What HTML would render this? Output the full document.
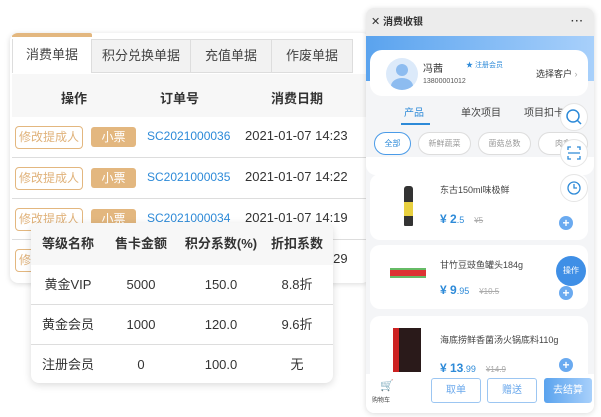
<!DOCTYPE html><html><head><meta charset="utf-8"><style>
*{margin:0;padding:0;box-sizing:border-box}
body{width:601px;height:417px;background:#fff;font-family:"Liberation Sans","Noto Sans CJK SC",sans-serif;position:relative;overflow:hidden;color:#333}
.abs{position:absolute}
.card{position:absolute;left:10px;top:33px;width:360px;height:250px;background:#fff;border-radius:8px;box-shadow:0 1px 6px rgba(0,0,0,.15);overflow:hidden}
.tab{position:absolute;top:6px;height:34px;border:1px solid #ddd;background:#f2f2f2;font-size:13px;line-height:32px;text-align:center;color:#444}
.hdr{position:absolute;left:2px;top:41px;width:358px;height:43px;background:#f7f7f7;font-size:13px;font-weight:bold}
.row{position:absolute;left:2px;width:358px;height:41px;border-bottom:1px solid #ddd;font-size:13px}
.b1{position:absolute;left:3px;top:9px;width:68px;height:23px;border:1px solid #e3b77f;border-radius:4px;color:#e0b27a;font-size:12px;line-height:21px;text-align:center}
.b2{position:absolute;left:79px;top:10px;width:45px;height:20px;background:#e3b77f;border-radius:3px;color:#fff;font-size:12px;line-height:20px;text-align:center}
.sc{position:absolute;left:135px;top:12px;color:#2d8ad8;font-size:12px}
.dt{position:absolute;left:233px;top:11px;font-size:13px;color:#333}
.ft{position:absolute;left:31px;top:223px;width:302px;height:160px;background:#fff;border-radius:8px;box-shadow:0 2px 8px rgba(0,0,0,.15);overflow:hidden;font-size:13px}
.ft .r{position:absolute;left:0;width:302px;height:40px;border-bottom:1px solid #ddd}
.ft span{position:absolute;top:12px;line-height:16px;height:16px;transform:translateX(-50%);white-space:nowrap}
.ph{position:absolute;left:366px;top:8px;width:228px;height:405px;background:#f4f5f7;border-radius:8px;box-shadow:0 1px 6px rgba(0,0,0,.15);overflow:hidden}
.pc{position:absolute;left:4px;width:218px;background:#fff;border-radius:10px}
.chip{position:absolute;top:124px;height:23px;border:1px solid #ddd;border-radius:12px;font-size:8px;color:#999;line-height:21px;text-align:center;background:#fff}
.fb{position:absolute;z-index:5;left:194px;width:28px;height:28px;border-radius:50%;background:#fff;border:1px solid #e5e5e5}
.plus{position:absolute;left:193px;width:14px;height:14px;border-radius:50%;background:#6aaaf0;color:#fff;font-size:12px;line-height:14px;text-align:center;font-weight:bold}
.pn{position:absolute;left:70px;font-size:9px;color:#444}
.pr{position:absolute;left:70px;color:#2d8ad8;font-size:12px;font-weight:bold}
.pr i{font-style:normal;font-size:9px;font-weight:normal}
.pr s{color:#aaa;font-size:8px;font-weight:normal;margin-left:10px}
</style></head><body>
<div class="card">
<div style="position:absolute;left:2px;top:0;width:80px;height:4px;background:#e3b77f;border-radius:2px 2px 0 0"></div>
<div class="tab" style="left:2px;width:80px;background:#fff;border-top:none;border-bottom:none">消费单据</div>
<div class="tab" style="left:81px;width:100px">积分兑换单据</div>
<div class="tab" style="left:180px;width:82px">充值单据</div>
<div class="tab" style="left:261px;width:82px">作废单据</div>
<div class="hdr"><span class="abs" style="left:49px;top:14px">操作</span><span class="abs" style="left:148px;top:14px">订单号</span><span class="abs" style="left:259px;top:14px">消费日期</span></div>
<div class="row" style="top:84px"><div class="b1">修改提成人</div><div class="b2">小票</div><div class="sc">SC2021000036</div><div class="dt">2021-01-07 14:23</div></div>
<div class="row" style="top:125px"><div class="b1">修改提成人</div><div class="b2">小票</div><div class="sc">SC2021000035</div><div class="dt">2021-01-07 14:22</div></div>
<div class="row" style="top:166px"><div class="b1">修改提成人</div><div class="b2">小票</div><div class="sc">SC2021000034</div><div class="dt">2021-01-07 14:19</div></div>
<div class="row" style="top:207px;border:none"><div class="b1">修改提成人</div><div class="dt">2021-01-07 14:29</div></div>
</div>
<div class="ft">
<div class="r" style="top:0;height:42px;background:#f7f7f7;border:none;font-weight:bold"><span style="left:37px;top:13px">等级名称</span><span style="left:110px;top:13px">售卡金额</span><span style="left:190px;top:13px">积分系数(%)</span><span style="left:266px;top:13px">折扣系数</span></div>
<div class="r" style="top:42px"><span style="left:37px">黄金VIP</span><span style="left:110px">5000</span><span style="left:190px">150.0</span><span style="left:266px">8.8折</span></div>
<div class="r" style="top:82px"><span style="left:37px">黄金会员</span><span style="left:110px">1000</span><span style="left:190px">120.0</span><span style="left:266px">9.6折</span></div>
<div class="r" style="top:122px;border:none"><span style="left:37px">注册会员</span><span style="left:110px">0</span><span style="left:190px">100.0</span><span style="left:266px">无</span></div>
</div>
<div class="ph">
<div class="abs" style="left:0;top:0;width:228px;height:28px;background:#ececec;font-size:10px;font-weight:bold;line-height:28px"><span style="margin-left:5px;font-weight:normal;font-size:11px">✕</span> 消费收银<span style="position:absolute;right:10px;letter-spacing:1px">···</span></div>
<div class="abs" style="left:0;top:28px;width:228px;height:45px;background:linear-gradient(90deg,#5aa3ee,#a8d0fb)"></div>
<div class="abs" style="left:4px;top:42px;width:218px;height:46px;background:#fff;border-radius:12px">
<div class="abs" style="left:16px;top:8px;width:32px;height:32px;border-radius:50%;background:#dceafa;overflow:hidden"><div class="abs" style="left:10px;top:6px;width:12px;height:12px;border-radius:50%;background:#8dbcf0"></div><div class="abs" style="left:5px;top:20px;width:22px;height:16px;border-radius:50%;background:#8dbcf0"></div></div>
<div class="abs" style="left:53px;top:10px;font-size:10px">冯茜</div>
<div class="abs" style="left:96px;top:10px;font-size:7px;color:#2d8ad8">★ 注册会员</div>
<div class="abs" style="left:53px;top:28px;font-size:7px;color:#555">13800001012</div>
<div class="abs" style="left:166px;top:17px;font-size:9px">选择客户 <span style="color:#aaa">›</span></div>
</div>
<div class="abs" style="left:38px;top:96px;font-size:10px;color:#2d8ad8">产品</div>
<div class="abs" style="left:35px;top:115px;width:29px;height:2px;background:#2d8ad8"></div>
<div class="abs" style="left:95px;top:96px;font-size:10px;color:#444">单次项目</div>
<div class="abs" style="left:158px;top:96px;font-size:10px;color:#444">项目扣卡</div>
<div class="chip" style="left:8px;width:37px;border-color:#4a9be8;color:#2d8ad8">全部</div>
<div class="chip" style="left:52px;width:53px">新鲜蔬菜</div>
<div class="chip" style="left:112px;width:53px">菌菇总数</div>
<div class="chip" style="left:172px;width:50px">肉禽</div>
<div class="abs" style="left:0;top:149px;width:228px;height:18px;background:#fff;border-radius:0 0 10px 10px"></div>
<div class="fb" style="top:95px"><svg width="26" height="26"><circle cx="12" cy="12" r="6" fill="none" stroke="#2d8ad8" stroke-width="1.5"/><path d="M16 16l4 4" stroke="#2d8ad8" stroke-width="1.5"/></svg></div>
<div class="fb" style="top:131px"><svg width="26" height="26"><path d="M7 10V7h3M16 7h3v3M19 16v3h-3M10 19H7v-3M7 13h12" fill="none" stroke="#2d8ad8" stroke-width="1.3"/></svg></div>
<div class="fb" style="top:166px"><svg width="26" height="26"><circle cx="13" cy="13" r="6" fill="none" stroke="#2d8ad8" stroke-width="1.3"/><path d="M13 9v4h3" fill="none" stroke="#2d8ad8" stroke-width="1.3"/></svg></div>
<div class="pc" style="top:166px;height:66px"><div class="abs" style="left:34px;top:12px;width:9px;height:40px;background:#333;border-radius:3px 3px 1px 1px"></div><div class="abs" style="left:34px;top:28px;width:9px;height:14px;background:#e8d040"></div><div class="pn" style="top:9px">东古150ml味极鲜</div><div class="pr" style="top:38px">¥ 2<i>.5</i><s>¥5</s></div></div>
<div class="plus" style="top:208px">+</div>
<div class="pc" style="top:237px;height:64px"><div class="abs" style="left:20px;top:23px;width:36px;height:10px;background:#d33;border-top:2px solid #6b6;border-bottom:2px solid #6b6"></div><div class="pn" style="top:13px">甘竹豆豉鱼罐头184g</div><div class="pr" style="top:38px">¥ 9<i>.95</i><s>¥10.5</s></div></div>
<div class="abs" style="left:190px;top:248px;width:30px;height:30px;border-radius:50%;background:#3f8fe6;color:#fff;font-size:8px;line-height:30px;text-align:center">操作</div>
<div class="plus" style="top:278px">+</div>
<div class="pc" style="top:308px;height:70px"><div class="abs" style="left:23px;top:12px;width:28px;height:44px;background:#2a1a1a;border-left:6px solid #c22"></div><div class="pn" style="top:17px">海底捞鲜香菌汤火锅底料110g</div><div class="pr" style="top:45px">¥ 13<i>.99</i><s>¥14.9</s></div></div>
<div class="plus" style="top:350px">+</div>
<div class="abs" style="left:0;top:366px;width:228px;height:39px;background:#fff">
<div class="abs" style="left:14px;top:5px;font-size:11px;color:#444">🛒</div>
<div class="abs" style="left:6px;top:21px;font-size:6px;color:#444">购物车</div>
<div class="abs" style="left:65px;top:4px;width:50px;height:25px;border:1px solid #9cc6f2;border-radius:3px;color:#6aa8ec;font-size:10px;line-height:23px;text-align:center">取单</div>
<div class="abs" style="left:121px;top:4px;width:50px;height:25px;border:1px solid #9cc6f2;border-radius:3px;color:#6aa8ec;font-size:10px;line-height:23px;text-align:center">赠送</div>
<div class="abs" style="left:178px;top:4px;width:48px;height:25px;background:linear-gradient(90deg,#5aa3ee,#a8d0fb);border-radius:3px;color:#fff;font-size:10px;line-height:25px;text-align:center">去结算</div>
</div>
</div>
</body></html>
